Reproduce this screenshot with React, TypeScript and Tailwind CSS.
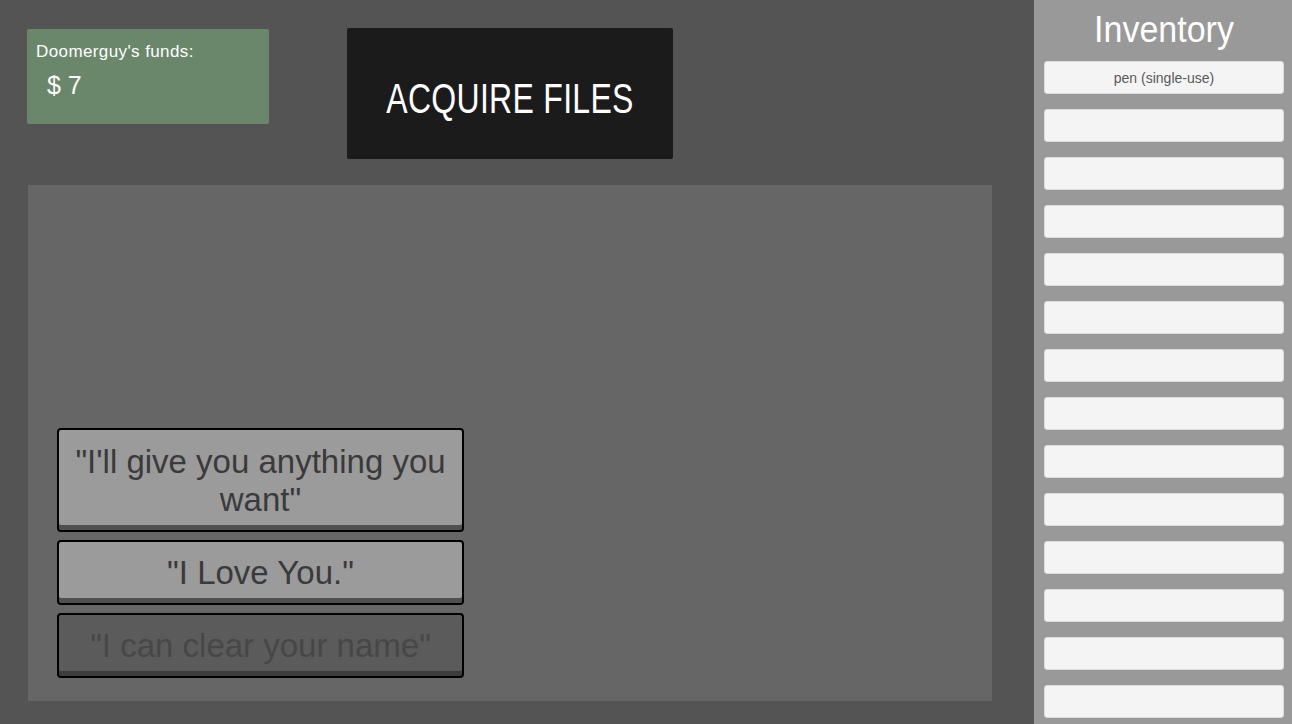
import { Fragment } from "react"

const pixelFont = { fontFamily: '"Liberation Sans", Arial, sans-serif' }

const slots = ["pen (single-use)", "", "", "", "", "", "", "", "", "", "", "", "", ""]

const replies = [
  { text: "\"I'll give you anything you want\"", tall: true, enabled: true },
  { text: "\"I Love You.\"", tall: false, enabled: true },
  { text: "\"I can clear your name\"", tall: false, enabled: false },
]

function ReplyButton({ text, tall, enabled }: { text: string; tall: boolean; enabled: boolean }) {
  return (
    <button
      className={`w-[407px] ${tall ? "h-[104px]" : "h-[65px]"} border-2 border-black rounded-[4px] flex items-center justify-center px-2 pt-[3px] pb-[2px] leading-[38px] text-[33px] text-center ${
        enabled
          ? "bg-[#9b9b9b] text-[#3a3a3a] shadow-[inset_0_-5px_0_#4f4f4f]"
          : "bg-[#5b5b5b] text-[#474747] shadow-[inset_0_-5px_0_#3d3d3d]"
      }`}
      style={pixelFont}
    >
      {text}
    </button>
  )
}

export default function App() {
  return (
    <div className="w-[1292px] h-[724px] flex bg-[#545454] overflow-hidden" style={pixelFont}>
      <div className="w-[1034px] flex flex-col pl-[27px] pt-[28px]">
        <div className="flex items-start h-[157px]">
          <div className="w-[242px] h-[95px] mt-px bg-[#6b876b] rounded-[2px] px-[9px] pt-[13px] text-white">
            <div className="text-[17px] leading-[20px] tracking-[0.4px]">Doomerguy's funds:</div>
            <div className="text-[25px] leading-[30px] mt-[8px] ml-[11px]">$ 7</div>
          </div>
          <div className="ml-[78px] w-[326px] h-[131px] bg-[#1b1b1b] rounded-[2px] flex items-center justify-center pt-[8px] text-white">
            <span className="text-[32px] scale-y-[1.35] tracking-[0.3px]">ACQUIRE FILES</span>
          </div>
        </div>
        <div className="ml-px w-[964px] h-[516px] bg-[#666666] flex flex-col justify-end gap-[8px] pl-[29px] pb-[23px]">
          {replies.map((r, i) => (
            <Fragment key={i}>
              <ReplyButton {...r} />
            </Fragment>
          ))}
        </div>
      </div>
      <div className="w-[258px] bg-[#999999] flex flex-col items-start pl-[10px]">
        <div className="w-[240px] h-[61px] flex items-center justify-center text-white text-[34px] scale-y-110 pb-[2px]">Inventory</div>
        <div className="flex flex-col gap-[15px]">
          {slots.map((s, i) => (
            <div
              key={i}
              className="w-[240px] h-[33px] bg-[#f4f4f4] rounded-[3px] border border-[#dcdcdc] flex items-center justify-center pt-px text-[14px] text-[#5a5a5a]"
            >
              {s}
            </div>
          ))}
        </div>
      </div>
    </div>
  )
}
